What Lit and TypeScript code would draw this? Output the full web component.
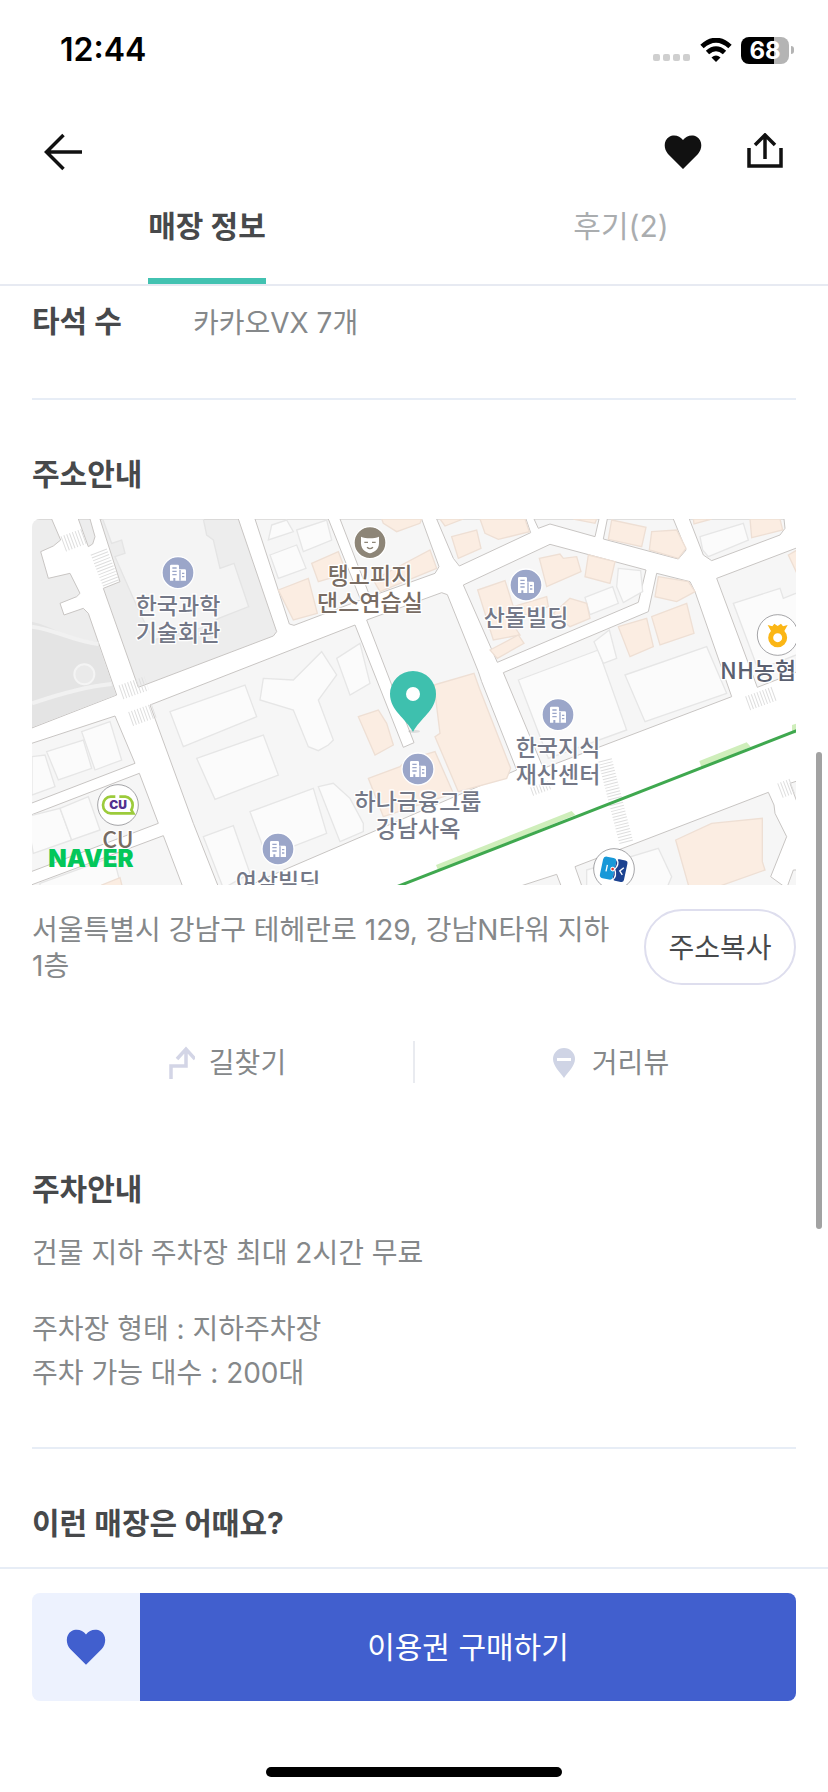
import { LitElement, html, css, svg } from "lit";
import { customElement, state } from "lit/decorators.js";

const BLOCKS = [
  "705,237 925,237 1022,480 822,556 808,552",
  "960,237 1205,237 1257,380 1245,400 1050,470",
  "1250,237 1300,355 1318,378 1532,278 1518,237",
  "1542,237 1555,265 1590,252 1725,290 1737,237",
  "1762,237 1750,297 1975,357 1998,330 1960,237",
  "2008,237 2050,345 2075,362 2280,285 2295,265 2292,237",
  "1330,435 1590,313 1878,390 1855,487 1432,667",
  "1450,698 1885,515 1910,400 2010,425 2025,455 2135,770 1570,985",
  "2090,415 2340,320 2340,692 2212,742",
  "390,795 1005,555 1150,922 1182,908 1040,540 1265,458 1282,464 1375,695 1385,725 1490,990 780,1295 670,1345 597,1345 520,1150",
  "20,915 285,828 345,970 20,1095",
  "20,1130 358,1000 415,1150 20,1300",
  "20,1340 430,1187 490,1345 20,1345",
  "1505,1337 1610,1303 1626,1345 1505,1345",
  "1665,1280 2245,1057 2262,1095 2265,1120 2300,1190 2252,1310 2300,1345 1688,1345",
  "2310,1030 2340,1020 2340,1110",
  "2300,1345 2320,1290 2340,1290 2340,1345",
];

const GREY_BLOCKS = [
  "20,237 95,237 122,300 100,318 62,335 85,415 150,400 180,460 170,470 120,490 132,525 190,505 205,520 290,765 20,870",
  "175,237 210,237 225,290 218,312 205,320",
  "240,237 300,425 250,445 355,742 760,588 770,575 655,237",
];

const LIGHT = [
  "1495,720 1735,630 1820,870 1585,955",
  "1815,705 2060,620 2120,760 1875,845",
  "1722,605 1768,570 1790,655 1750,670",
  "1695,472 1778,440 1795,490 1710,524",
  "1795,385 1862,392 1868,455 1810,488 1790,440",
  "2040,290 2170,250 2185,300 2065,350 2048,330",
  "2140,490 2280,445 2290,475 2340,455 2340,640 2215,690",
  "450,815 675,735 710,830 490,920",
  "530,955 730,885 775,1005 585,1078",
  "730,715 820,720 905,635 950,705 895,780 940,900 925,915 895,932 865,920 820,810 720,780",
  "895,1040 940,1030 990,1075 1030,1150 1030,1175 960,1205",
  "690,1115 880,1045 920,1180 740,1250",
  "550,1190 640,1157 690,1300 610,1345",
  "950,655 1020,610 1050,730 990,765",
  "36,950 75,945 105,1040 36,1065",
  "80,935 190,900 215,985 115,1020",
  "185,875 270,845 305,960 225,990",
  "20,1130 120,1105 155,1200 40,1240",
  "120,1105 205,1070 240,1170 155,1200",
  "60,1330 280,1250 305,1345 60,1345",
  "1700,1290 1915,1225 1955,1310 1940,1345 1700,1345",
  "755,255 800,240 820,275 745,300",
  "830,270 920,240 935,300 850,335",
  "750,345 830,315 858,385 775,415",
];

const PEACH = [
  "1242,735 1362,700 1378,745 1472,985 1460,1015 1315,1055 1245,890 1260,880",
  "1045,1015 1140,980 1160,960 1245,935 1300,1060 1090,1130",
  "1015,830 1075,810 1100,850 1120,915 1065,945",
  "775,450 865,415 892,520 820,540",
  "875,370 955,335 980,400 895,425",
  "1085,237 1205,237 1200,250 1130,275 1090,250",
  "1060,420 1230,330 1250,385 1080,455",
  "1295,290 1370,270 1383,325 1315,355",
  "1380,237 1515,237 1528,275 1435,298 1395,280",
  "1260,237 1330,237 1275,258",
  "1660,237 1730,237 1725,250",
  "1775,240 1878,262 1865,320 1765,298",
  "1895,275 1970,270 1998,325 1975,355 1888,330",
  "2020,237 2075,237 2022,252",
  "2190,237 2280,237 2288,270 2195,293",
  "1558,355 1620,342 1630,355 1670,350 1683,395 1580,440",
  "1705,345 1785,365 1770,430 1695,410",
  "1373,450 1455,422 1480,500 1580,470 1585,500 1470,540 1500,585 1420,600",
  "1650,475 1700,490 1710,535 1650,560 1600,520",
  "1410,630 1495,585 1512,610 1432,655",
  "1915,410 2005,425 2025,455 1970,485 1905,470",
  "1795,560 1880,535 1900,620 1830,650",
  "1895,530 2000,490 2022,580 1920,615",
  "2305,345 2340,325 2340,420",
  "1967,1200 2075,1150 2227,1135 2227,1265 2235,1290 2080,1345 2008,1345",
  "245,1335 300,1313 308,1345 245,1345",
];

const CROSSWALKS = [
  [130, 312, 195, 288, 48],
  [236, 335, 275, 435, 52],
  [303, 757, 380, 730, 44],
  [332, 837, 402, 812, 44],
  [1755, 960, 1820, 1212, 42],
  [1535, 1055, 1590, 1035, 26],
  [2183, 790, 2265, 760, 44],
  [2280, 1052, 2322, 1036, 46],
];

const OFFICES = [
  { x: 474, y: 398, lines: ["한국과학", "기술회관"] },
  { x: 1518, y: 435, lines: ["산돌빌딩"] },
  { x: 1614, y: 824, lines: ["한국지식", "재산센터"] },
  { x: 1194, y: 987, lines: ["하나금융그룹", "강남사옥"] },
  { x: 774, y: 1227, lines: ["여삼빌딩"] },
];

const HEART =
  "M19 34 L4 19 C-1 13 0 5 5 2 C10 -1 16 1 19 5 C22 1 28 -1 33 2 C38 5 39 13 34 19 Z";

@customElement("store-map")
class StoreMap extends LitElement {
  static styles = css`
    :host { display: block; border-radius: 8px 8px 0 0; overflow: hidden; }
    .map { display: block; width: 100%; height: auto; }
    .block { fill: #f6f6f6; stroke: #c8c5c3; stroke-width: 3; }
    .grey { fill: #ededed; stroke: #c8c5c3; stroke-width: 3; }
    .light { fill: #fbfbfb; stroke: #e6e6e6; stroke-width: 4; }
    .soft { fill: #f4f4f4; stroke: #e4e4e4; stroke-width: 4; }
    .shade { fill: #e4e4e4; }
    .path { fill: none; stroke: #f1f1f1; stroke-width: 12; }
    .peach { fill: #fbede2; stroke: #eedfd4; stroke-width: 4; }
    .walk { stroke: #dedede; stroke-dasharray: 3 6; }
    .line { stroke: #3fa84f; stroke-width: 9; }
    .station { fill: #cfeebb; }
    .label {
      font: 500 69px "Noto Sans CJK KR", sans-serif;
      text-anchor: middle;
      fill: #747887;
      stroke: #ffffff;
      stroke-width: 8;
      stroke-linejoin: round;
      paint-order: stroke;
    }
    .brown { fill: #786c63; }
    .dark { fill: #5a6070; text-anchor: start; }
    .naver { font: 900 72px Inter, sans-serif; fill: #03c75a; }
    .cu { font: 900 36px Inter, sans-serif; fill: #52308e; text-anchor: middle; }
    .brand { fill: #ffffff; stroke: #77777c; stroke-width: 2; }
  `;

  private office(o: { x: number; y: number; lines: string[] }) {
    return svg`
      <g transform="translate(${o.x} ${o.y})">
        <circle r="48" fill="#9ba6c9" stroke="#ffffff" stroke-width="4"></circle>
        <path fill="#ffffff" d="M-24 -20 a4 4 0 0 1 4 -4 H-1 a4 4 0 0 1 4 4 V-10 H20 a4 4 0 0 1 4 4 V24 H-8 V16 H-14 V24 H-24 Z"></path>
        <path stroke="#9ba6c9" stroke-width="4" fill="none" d="M-17 -14 H-4 M-17 -4 H-4 M-17 6 H-4 M6 -8 V24 M12 2 H19 M12 12 H19"></path>
        ${o.lines.map((l, i) => svg`<text class="label" y=${123 + i * 82}>${l}</text>`)}
      </g>`;
  }

  render() {
    return html`
      <svg class="map" viewBox="36 237 2292 1098" role="img" aria-label="매장 위치 지도">
        <rect x="0" y="200" width="2400" height="1200" fill="#ffffff"></rect>
        ${GREY_BLOCKS.map((p) => svg`<polygon class="grey" points=${p}></polygon>`)}
        <path class="shade" d="M36 545 C100 560 130 590 190 600 L232 605 L262 690 L288 765 L36 862 Z"></path>
        <path class="path" d="M36 560 C110 570 150 600 235 612 M36 790 C110 765 190 740 275 732"></path>
        <circle cx="193" cy="703" r="30" fill="#eaeaea" stroke="#f4f4f4" stroke-width="6"></circle>
        <polygon class="soft" points="248,237 550,237 560,285 580,300 600,385 642,370 686,500 596,535 560,560 400,600 360,520 320,430 285,350 315,340 305,300 275,310"></polygon>
        ${BLOCKS.map((p) => svg`<polygon class="block" points=${p}></polygon>`)}
        ${LIGHT.map((p) => svg`<polygon class="light" points=${p}></polygon>`)}
        ${PEACH.map((p) => svg`<polygon class="peach" points=${p}></polygon>`)}
        ${CROSSWALKS.map(
          ([a, b, c, d, w]) =>
            svg`<line class="walk" x1=${a} y1=${b} x2=${c} y2=${d} stroke-width=${w}></line>`
        )}
        <polygon class="station" points="1248,1275 1655,1113 1666,1125 1255,1292"></polygon>
        <polygon class="station" points="2038,963 2180,907 2192,920 2045,985"></polygon>
        <polygon class="station" points="2316,855 2340,848 2340,880 2316,880"></polygon>
        <line class="line" x1="1095" y1="1354" x2="2340" y2="868"></line>
        ${OFFICES.map((o) => this.office(o))}
        <g transform="translate(1050 308)">
          <circle r="48" fill="#8d8577" stroke="#ffffff" stroke-width="4"></circle>
          <path fill="#ffffff" d="M-27 -18 C-12 -12 12 -12 27 -18 V2 C27 22 10 30 0 32 C-10 30 -27 22 -27 2 Z"></path>
          <path stroke="#8d8577" stroke-width="4" fill="none" d="M-17 -1 H-6 M6 -1 H17 M-9 14 Q0 22 9 14"></path>
          <text class="label brown" y="123">탱고피지</text>
          <text class="label brown" y="205">댄스연습실</text>
        </g>
        <g transform="translate(2273 585)">
          <circle class="brand" r="61"></circle>
          <circle cy="8" r="21" fill="none" stroke="#fbb615" stroke-width="15"></circle>
          <path fill="#fbb615" d="M-30 -30 L-16 -26 L-10 -34 L0 -27 L10 -34 L16 -26 L30 -30 L20 -12 H-20 Z"></path>
        </g>
        <text class="label dark" x="2100" y="716">NH농협·</text>
        <g transform="translate(294 1095)">
          <circle class="brand" r="61"></circle>
          <path fill="none" stroke="#9ccb3b" stroke-width="8" d="M-8 -25 H-22 A23 25 0 0 0 -22 25 H46 L40 15 Q44 8 44 0 A24 25 0 0 0 22 -25 H4"></path>
          <text class="cu" y="13">CU</text>
          <text class="label brown" y="128">CU</text>
        </g>
        <g transform="translate(1782 1287)">
          <circle class="brand" r="61"></circle>
          <g transform="rotate(12)">
            <rect x="-38" y="-32" width="40" height="66" rx="10" fill="#1798d8"></rect>
            <rect x="2" y="-32" width="34" height="66" rx="8" fill="#1c4391"></rect>
            <path stroke="#ffffff" stroke-width="4" fill="none" d="M-22 -8 V12 M2 -32 Q14 -16 2 0 Q14 18 2 34 M28 -10 L18 2 L28 12"></path>
            <circle cx="-4" cy="1" r="7" fill="#ffffff"></circle>
            <circle cx="-4" cy="1" r="4" fill="#e0362c"></circle>
          </g>
        </g>
        <text class="naver" x="85" y="1281">NAVER</text>
        <ellipse cx="1182" cy="874" rx="18" ry="5" fill="#00000018"></ellipse>
        <path fill="#3ec0ae" d="M1179 876 C1158 835 1110 812 1110 762 a69 69 0 0 1 138 0 C1248 812 1200 835 1179 876 Z"></path>
        <circle cx="1179" cy="762" r="21" fill="#ffffff"></circle>
      </svg>`;
  }
}

@customElement("app-root")
class AppRoot extends LitElement {
  @state() private tab = 0;

  static styles = css`
    :host {
      display: flex;
      flex-direction: column;
      position: relative;
      min-height: 100vh;
      background: #ffffff;
      color: #85888a;
      font-family: Inter, "Noto Sans CJK KR", sans-serif;
      font-size: 28px;
      line-height: 44px;
    }
    *, *::before { box-sizing: border-box; }
    button {
      margin: 0; padding: 0; border: 0; background: none;
      font: inherit; color: inherit; cursor: pointer;
    }
    svg { display: block; }
    p, h2 { margin: 0; }
    .status {
      display: flex; align-items: center; justify-content: space-between;
      height: 100px; padding: 0 34px 0 60px;
      color: #000000;
    }
    .time { font-size: 32px; font-weight: 600; }
    .signals { display: flex; align-items: center; gap: 9px; }
    .battery { display: flex; align-items: center; gap: 2px; }
    .level {
      display: grid; place-items: center;
      width: 48px; height: 27px; border-radius: 8px;
      background: linear-gradient(90deg, #000000 68%, #b4b4b4 68%);
      color: #ffffff; font-size: 24px; line-height: 27px; font-weight: 700;
    }
    .nub { width: 3px; height: 8px; border-radius: 0 4px 4px 0; background: #b4b4b4; }
    .nav { display: flex; align-items: center; height: 104px; padding: 0 44px; gap: 44px; }
    .spacer { flex: 1; }
    .tabs { display: flex; height: 82px; border-bottom: 2px solid #e7eaf2; }
    .tab-cell { flex: 1; display: flex; justify-content: center; }
    .tab {
      display: flex; align-items: flex-start; height: 80px;
      border-bottom: 6px solid transparent; color: #aaadaf; font-size: 30px;
    }
    .tab.on { border-color: #42c2b1; color: #47494b; font-weight: 700; }
    .section { margin: 0 32px; padding: 52px 0; border-bottom: 2px solid #e7edf6; }
    .section.first { display: flex; align-items: flex-start; padding: 13px 0 53px; }
    .section.last { border: 0; padding: 52px 0 22px; }
    .title { color: #47494b; font-size: 30px; line-height: 44px; font-weight: 700; }
    .first .title { width: 161px; }
    .value { padding-top: 2px; }
    .map-box { margin: 23px 0 24px; }
    .address { display: flex; align-items: center; gap: 24px; }
    .address-text { flex: 1; padding-top: 2px; line-height: 36px; word-break: keep-all; }
    .copy {
      width: 152px; height: 76px; border: 2px solid #dedeee; border-radius: 38px;
      padding-top: 2px; color: #47494b;
    }
    .actions { display: flex; margin: 56px 0 84px; }
    .action {
      flex: 1; display: flex; align-items: center; justify-content: center;
      gap: 14px; height: 42px; padding: 2px 0 0 10px;
    }
    .action + .action { border-left: 2px solid #e9ebf0; gap: 16px; }
    .parking { display: grid; gap: 32px; margin-top: 20px; }
    .footer {
      position: sticky; bottom: 0; margin-top: auto;
      padding: 24px 32px 16px; border-top: 2px solid #e7edf6; background: #ffffff;
    }
    .buy-bar { display: flex; height: 108px; border-radius: 8px; overflow: hidden; }
    .like { display: grid; place-items: center; width: 108px; background: #edf2fe; }
    .buy { flex: 1; background: #415fce; color: #ffffff; font-size: 30px; }
    .home { width: 296px; height: 10px; margin: 66px auto 0; border-radius: 5px; background: #000000; }
    .thumb {
      position: absolute; right: 6px; top: 752px;
      width: 6px; height: 477px; border-radius: 3px; background: #a2a2a2;
    }
  `;

  render() {
    return html`
      <header>
        <div class="status">
          <span class="time">12:44</span>
          <div class="signals">
            <svg width="38" height="26" viewBox="0 0 38 26" fill="#cfcfcf" aria-hidden="true">
              <rect x="0" y="17" width="7" height="7" rx="2"></rect>
              <rect x="10" y="17" width="7" height="7" rx="2"></rect>
              <rect x="20" y="17" width="7" height="7" rx="2"></rect>
              <rect x="30" y="17" width="7" height="7" rx="2"></rect>
            </svg>
            <svg width="32" height="24" viewBox="0 0 32 24" fill="none" stroke="#000000" stroke-width="5" aria-hidden="true">
              <path d="M2 8.500 Q16 -4 30 8.500"></path>
              <path d="M7.500 14.500 Q16 7 24.500 14.500"></path>
              <path stroke="none" fill="#000000" d="M11.500 19.500 Q16 15.500 20.500 19.500 L16 24 Z"></path>
            </svg>
            <div class="battery"><span class="level">68</span><span class="nub"></span></div>
          </div>
        </div>
        <nav class="nav">
          <button aria-label="뒤로">
            <svg width="38" height="38" viewBox="0 0 38 38" fill="none" stroke="#111111" stroke-width="3.500">
              <path d="M38 19 H3 M19.500 2 L2.500 19 L19.500 36"></path>
            </svg>
          </button>
          <span class="spacer"></span>
          <button aria-label="찜">
            <svg width="38" height="34" viewBox="0 0 38 34" fill="#111111"><path d=${HEART}></path></svg>
          </button>
          <button aria-label="공유">
            <svg width="38" height="38" viewBox="0 0 38 38" fill="none" stroke="#111111" stroke-width="3.500">
              <path d="M3 15 V33 H35 V15 M19 26 V2 M9 12 L19 2 L29 12"></path>
            </svg>
          </button>
        </nav>
        <div class="tabs" role="tablist">
          ${["매장 정보", "후기(2)"].map(
            (t, i) => html`<div class="tab-cell">
              <button
                class="tab ${this.tab === i ? "on" : ""}"
                role="tab"
                aria-selected=${this.tab === i}
                @click=${() => (this.tab = i)}
              >${t}</button>
            </div>`
          )}
        </div>
      </header>
      <main>
        <section class="section first">
          <h2 class="title">타석 수</h2>
          <p class="value">카카오VX 7개</p>
        </section>
        <section class="section">
          <h2 class="title">주소안내</h2>
          <div class="map-box"><store-map></store-map></div>
          <div class="address">
            <p class="address-text">서울특별시 강남구 테헤란로 129, 강남N타워 지하 1층</p>
            <button class="copy">주소복사</button>
          </div>
          <div class="actions">
            <button class="action">
              <svg width="26" height="34" viewBox="0 0 26 34" fill="none" stroke="#d3d5e6" stroke-width="3.500">
                <path d="M2 33 V20 H17 V3 M8 13 L17 3 L26 13"></path>
              </svg>
              길찾기
            </button>
            <button class="action">
              <svg width="24" height="30" viewBox="0 0 24 30">
                <path fill="#cfd4e5" d="M12 30 C8 24 1 18 1 11 A11 11 0 0 1 23 11 C23 18 16 24 12 30 Z"></path>
                <rect x="5" y="10" width="14" height="3" fill="#ffffff"></rect>
              </svg>
              거리뷰
            </button>
          </div>
          <h2 class="title">주차안내</h2>
          <div class="parking">
            <p>건물 지하 주차장 최대 2시간 무료</p>
            <p>주차장 형태 : 지하주차장<br />주차 가능 대수 : 200대</p>
          </div>
        </section>
        <section class="section last">
          <h2 class="title">이런 매장은 어때요?</h2>
        </section>
      </main>
      <footer class="footer">
        <div class="buy-bar">
          <button class="like" aria-label="찜하기">
            <svg width="42" height="37" viewBox="-1 0 40 35" fill="#415fce"><path d=${HEART}></path></svg>
          </button>
          <button class="buy">이용권 구매하기</button>
        </div>
        <div class="home"></div>
      </footer>
      <div class="thumb"></div>
    `;
  }
}
